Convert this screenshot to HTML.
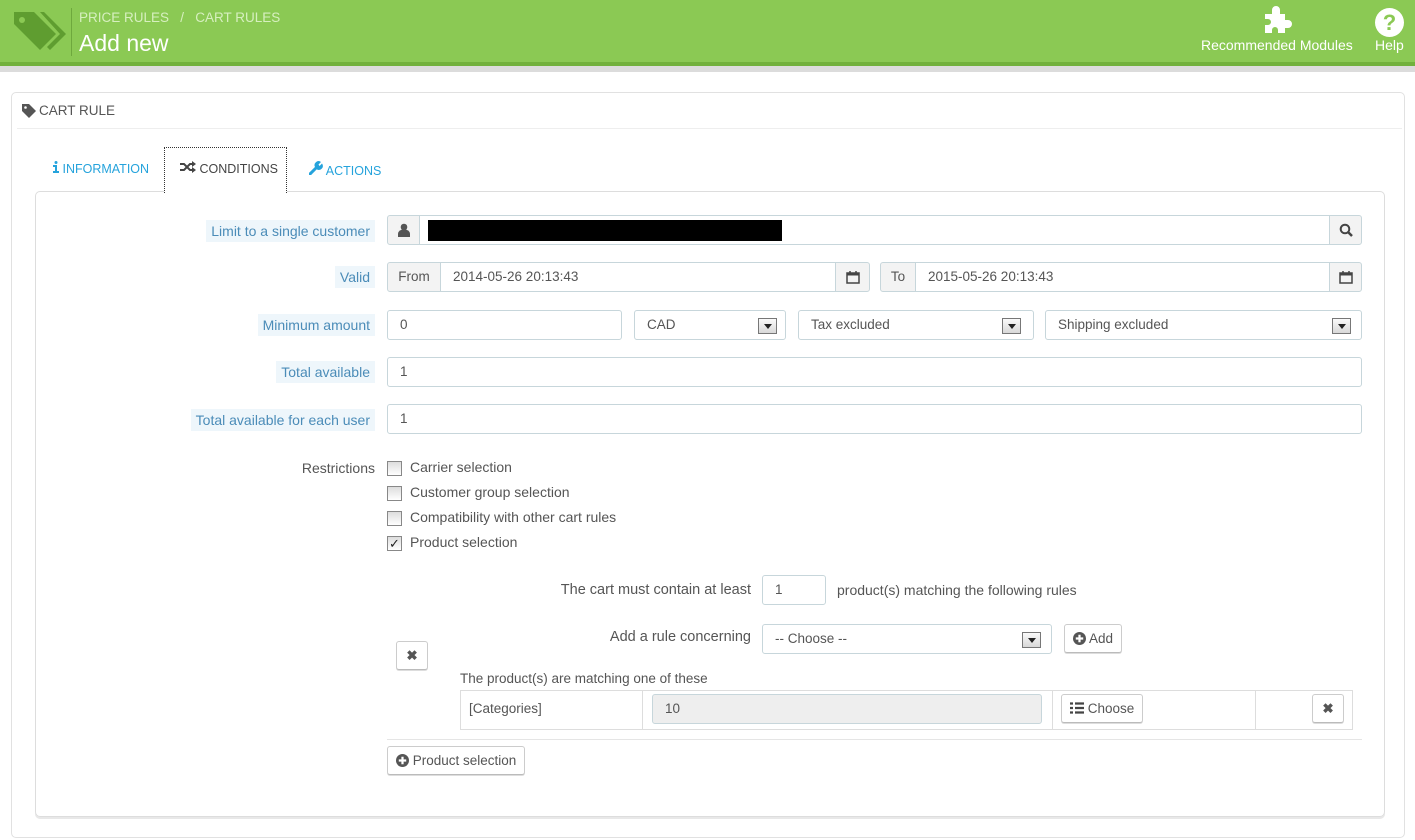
<!DOCTYPE html>
<html><head><meta charset="utf-8">
<style>
*{box-sizing:border-box;margin:0;padding:0}
body{width:1415px;height:840px;background:#fff;font-family:"Liberation Sans",sans-serif;font-size:14px;color:#555;position:relative;overflow:hidden}
.a{position:absolute}
.hdr{left:0;top:0;width:1415px;height:62px;background:#8bc954}
.hdr2{left:0;top:62px;width:1415px;height:4px;background:#72b13c}
.hdr3{left:0;top:66px;width:1415px;height:6px;background:#dcdcdc}
.lbl{right:1040px;height:22px;line-height:22px;padding:0 5px;background:#eef6fb;color:#4b8cb8;font-size:14px}
.inp{border:1px solid #c7d6db;border-radius:3px;background:#fff;height:30px;line-height:28px;padding-left:12px;font-size:13.5px;color:#555}
.addon{background:#f3f3f3;border:1px solid #c7d6db;height:30px;line-height:28px;text-align:center;color:#555;font-size:13.5px}
.sel-arrow{position:absolute;top:7px;width:19px;height:16px;border:1px solid #777;background:linear-gradient(#fafafa,#d8d8d8)}
.sel-arrow:after{content:"";position:absolute;left:5px;top:5px;border-left:4px solid transparent;border-right:4px solid transparent;border-top:5px solid #222}
.cb{width:15px;height:15px;border:1px solid #888;background:linear-gradient(#ddd,#fff)}
.btn{border:1px solid #ccc;border-bottom-color:#bbb;border-radius:3px;background:#fff;height:29px;line-height:27px;padding:0 8px;font-size:13.5px;color:#555;box-shadow:0 1px 0 #ddd}
.ck{font-size:14px;color:#555}
.cal{display:inline-block;margin-top:7px}
</style></head><body>
<div class="a hdr"></div><div class="a hdr2"></div><div class="a hdr3"></div>
<svg class="a" style="left:12px;top:6px" width="54" height="48" viewBox="0 0 54 48">
<path d="M2 6 L22 6 L44 28 L28 44 L2 18 Z" fill="#5f9d30"/><path d="M28 6 L32 6 L54 28 L38 44 L35 41 L48 28 Z" fill="#5f9d30"/><circle cx="10" cy="14" r="3" fill="#8bc954"/></svg>
<div class="a" style="left:71px;top:8px;width:1px;height:48px;background:#6ea83d"></div>
<div class="a" style="left:79px;top:10px;color:#d6efbf;font-size:13.5px">PRICE RULES &nbsp;&nbsp;/&nbsp;&nbsp; CART RULES</div>
<div class="a" style="left:79px;top:30px;color:#fff;font-size:23px">Add new</div>
<svg class="a" style="left:1263px;top:6px" width="30" height="28" viewBox="0 0 30 28"><path d="M2 8 H9 V4 a4 4 0 0 1 8 0 V8 H22 V14 h3 a4 4 0 0 1 0 8 h-3 V27 H15 v-3 a3 3 0 0 0 -6 0 v3 H2 V19 h3 a3 3 0 0 0 0-6 H2Z" fill="#fff"/></svg>
<div class="a" style="left:1201px;top:37px;color:#fff;font-size:14px">Recommended Modules</div>
<div class="a" style="left:1375px;top:8px;width:29px;height:29px;border-radius:50%;background:#fff;color:#8bc954;font-weight:bold;font-size:22px;line-height:29px;text-align:center">?</div>
<div class="a" style="left:1375px;top:37px;color:#fff;font-size:14px">Help</div>

<div class="a" style="left:11px;top:92px;width:1394px;height:746px;border:1px solid #e1e1e1;border-radius:5px"></div>
<svg class="a" style="left:22px;top:104px" width="14" height="14" viewBox="0 0 14 14"><path d="M0 0 H7 L14 7 L7 14 L0 7Z" fill="#555"/><circle cx="3.5" cy="3.5" r="1.3" fill="#fff"/></svg>
<div class="a" style="left:39px;top:103px;font-size:13.5px;color:#555">CART RULE</div>
<div class="a" style="left:17px;top:128px;width:1385px;height:1px;background:#eee"></div>

<div class="a" style="left:35px;top:191px;width:1350px;height:626px;border:1px solid #ddd;border-radius:5px;box-shadow:0 2px 0 #e8e8e8"></div>
<div class="a" style="left:164px;top:147px;width:123px;height:46px;border:1px dotted #333;border-bottom:none;background:#fff"></div>
<div class="a" style="left:53px;top:161px;color:#25a3dc;font-size:12.5px"><svg width="6" height="12" viewBox="0 0 6 12"><circle cx="3" cy="1.5" r="1.5" fill="#25a3dc"/><path d="M0 4 H4 V10 H6 V12 H0 V10 H2 V6 H0Z" fill="#25a3dc"/></svg> INFORMATION</div>
<div class="a" style="left:180px;top:161px;color:#444;font-size:12.5px"><svg width="16" height="12" viewBox="0 0 16 12"><path d="M0 3 H4 L10 9 H13 M0 9 H4 L10 3 H13" fill="none" stroke="#444" stroke-width="2"/><path d="M12 0 L16 3 L12 6Z M12 6 L16 9 L12 12Z" fill="#444"/></svg> CONDITIONS</div>
<div class="a" style="left:309px;top:161px;color:#25a3dc;font-size:12.5px"><svg width="14" height="14" viewBox="0 0 14 14"><path d="M1 13 L7 7" stroke="#25a3dc" stroke-width="3" stroke-linecap="round"/><path d="M6 6 a4 4 0 0 1 6-5 L9.5 3.5 L10.5 5 L13 2.5 a4 4 0 0 1 -5 6Z" fill="#25a3dc"/></svg> ACTIONS</div>

<div class="a lbl" style="top:220px">Limit to a single customer</div>
<div class="a addon" style="left:387px;top:215px;width:33px;border-radius:3px 0 0 3px"><svg width="12" height="14" viewBox="0 0 12 14" style="margin-top:7px"><circle cx="6" cy="4" r="3.3" fill="#555"/><path d="M0 14 V11 a5 4 0 0 1 12 0 V14Z" fill="#555"/></svg></div>
<div class="a inp" style="left:419px;top:215px;width:911px;border-radius:0"></div>
<div class="a" style="left:428px;top:220px;width:354px;height:21px;background:#000"></div>
<div class="a addon" style="left:1329px;top:215px;width:33px;border-radius:0 3px 3px 0"><svg width="14" height="14" viewBox="0 0 14 14" style="margin-top:7px"><circle cx="6" cy="6" r="4.3" fill="none" stroke="#444" stroke-width="2"/><path d="M9 9 L13 13" stroke="#444" stroke-width="2.5"/></svg></div>

<div class="a lbl" style="top:266px">Valid</div>
<div class="a addon" style="left:387px;top:262px;width:54px;border-radius:3px 0 0 3px">From</div>
<div class="a inp" style="left:440px;top:262px;width:396px;border-radius:0">2014-05-26 20:13:43</div>
<div class="a addon" style="left:835px;top:262px;width:35px;border-radius:0 3px 3px 0"><svg class="cal" width="14" height="14" viewBox="0 0 14 14"><rect x="1" y="3" width="12" height="10" fill="none" stroke="#444" stroke-width="1.5"/><rect x="1" y="3" width="12" height="2.5" fill="#444"/><path d="M4 1 V4 M10 1 V4" stroke="#444" stroke-width="1.5"/></svg></div>
<div class="a addon" style="left:880px;top:262px;width:36px;border-radius:3px 0 0 3px">To</div>
<div class="a inp" style="left:915px;top:262px;width:415px;border-radius:0">2015-05-26 20:13:43</div>
<div class="a addon" style="left:1329px;top:262px;width:33px;border-radius:0 3px 3px 0"><svg class="cal" width="14" height="14" viewBox="0 0 14 14"><rect x="1" y="3" width="12" height="10" fill="none" stroke="#444" stroke-width="1.5"/><rect x="1" y="3" width="12" height="2.5" fill="#444"/><path d="M4 1 V4 M10 1 V4" stroke="#444" stroke-width="1.5"/></svg></div>

<div class="a lbl" style="top:314px">Minimum amount</div>
<div class="a inp" style="left:387px;top:310px;width:235px">0</div>
<div class="a inp" style="left:634px;top:310px;width:152px">CAD<span class="sel-arrow" style="right:8px"></span></div>
<div class="a inp" style="left:798px;top:310px;width:236px">Tax excluded<span class="sel-arrow" style="right:12px"></span></div>
<div class="a inp" style="left:1045px;top:310px;width:317px">Shipping excluded<span class="sel-arrow" style="right:10px"></span></div>

<div class="a lbl" style="top:361px">Total available</div>
<div class="a inp" style="left:387px;top:357px;width:975px">1</div>
<div class="a lbl" style="top:409px">Total available for each user</div>
<div class="a inp" style="left:387px;top:404px;width:975px">1</div>

<div class="a" style="right:1040px;top:460px;font-size:14px;color:#555">Restrictions</div>
<div class="a cb" style="left:387px;top:461px"></div><div class="a ck" style="left:410px;top:459px">Carrier selection</div>
<div class="a cb" style="left:387px;top:486px"></div><div class="a ck" style="left:410px;top:484px">Customer group selection</div>
<div class="a cb" style="left:387px;top:511px"></div><div class="a ck" style="left:410px;top:509px">Compatibility with other cart rules</div>
<div class="a cb" style="left:387px;top:536px;font-size:13px;line-height:13px;text-align:center;color:#222">✓</div><div class="a ck" style="left:410px;top:534px">Product selection</div>

<div class="a" style="right:664px;top:582px;font-size:14.5px">The cart must contain at least</div>
<div class="a inp" style="left:762px;top:575px;width:64px">1</div>
<div class="a" style="left:837px;top:582px;font-size:14px">product(s) matching the following rules</div>

<div class="a" style="right:664px;top:629px;font-size:14.5px">Add a rule concerning</div>
<div class="a inp" style="left:762px;top:624px;width:290px">-- Choose --<span class="sel-arrow" style="right:10px"></span></div>
<div class="a btn" style="left:1064px;top:624px"><svg width="13" height="13" viewBox="0 0 14 14" style="vertical-align:-2px"><circle cx="7" cy="7" r="7" fill="#555"/><path d="M7 3 V11 M3 7 H11" stroke="#fff" stroke-width="2.4"/></svg> Add</div>
<div class="a btn" style="left:396px;top:641px;width:32px;padding:0;text-align:center;font-weight:bold">✖</div>

<div class="a" style="left:460px;top:671px;font-size:13.5px">The product(s) are matching one of these</div>
<div class="a" style="left:460px;top:690px;width:893px;height:40px;border:1px solid #ddd"></div>
<div class="a" style="left:642px;top:690px;width:1px;height:40px;background:#ddd"></div>
<div class="a" style="left:1052px;top:690px;width:1px;height:40px;background:#ddd"></div>
<div class="a" style="left:1255px;top:690px;width:1px;height:40px;background:#ddd"></div>
<div class="a" style="left:469px;top:701px;font-size:13.5px">[Categories]</div>
<div class="a inp" style="left:652px;top:694px;width:390px;background:#eee">10</div>
<div class="a btn" style="left:1061px;top:694px"><svg width="14" height="12" viewBox="0 0 14 12" style="vertical-align:-1px"><path d="M0 1.5 H3 M5 1.5 H14 M0 6 H3 M5 6 H14 M0 10.5 H3 M5 10.5 H14" stroke="#444" stroke-width="2.2"/></svg> Choose</div>
<div class="a btn" style="left:1312px;top:694px;width:32px;padding:0;text-align:center;font-weight:bold">✖</div>
<div class="a" style="left:387px;top:739px;width:975px;height:1px;background:#e5e5e5"></div>
<div class="a btn" style="left:387px;top:746px"><svg width="13" height="13" viewBox="0 0 14 14" style="vertical-align:-2px"><circle cx="7" cy="7" r="7" fill="#555"/><path d="M7 3 V11 M3 7 H11" stroke="#fff" stroke-width="2.4"/></svg> Product selection</div>
</body></html>
